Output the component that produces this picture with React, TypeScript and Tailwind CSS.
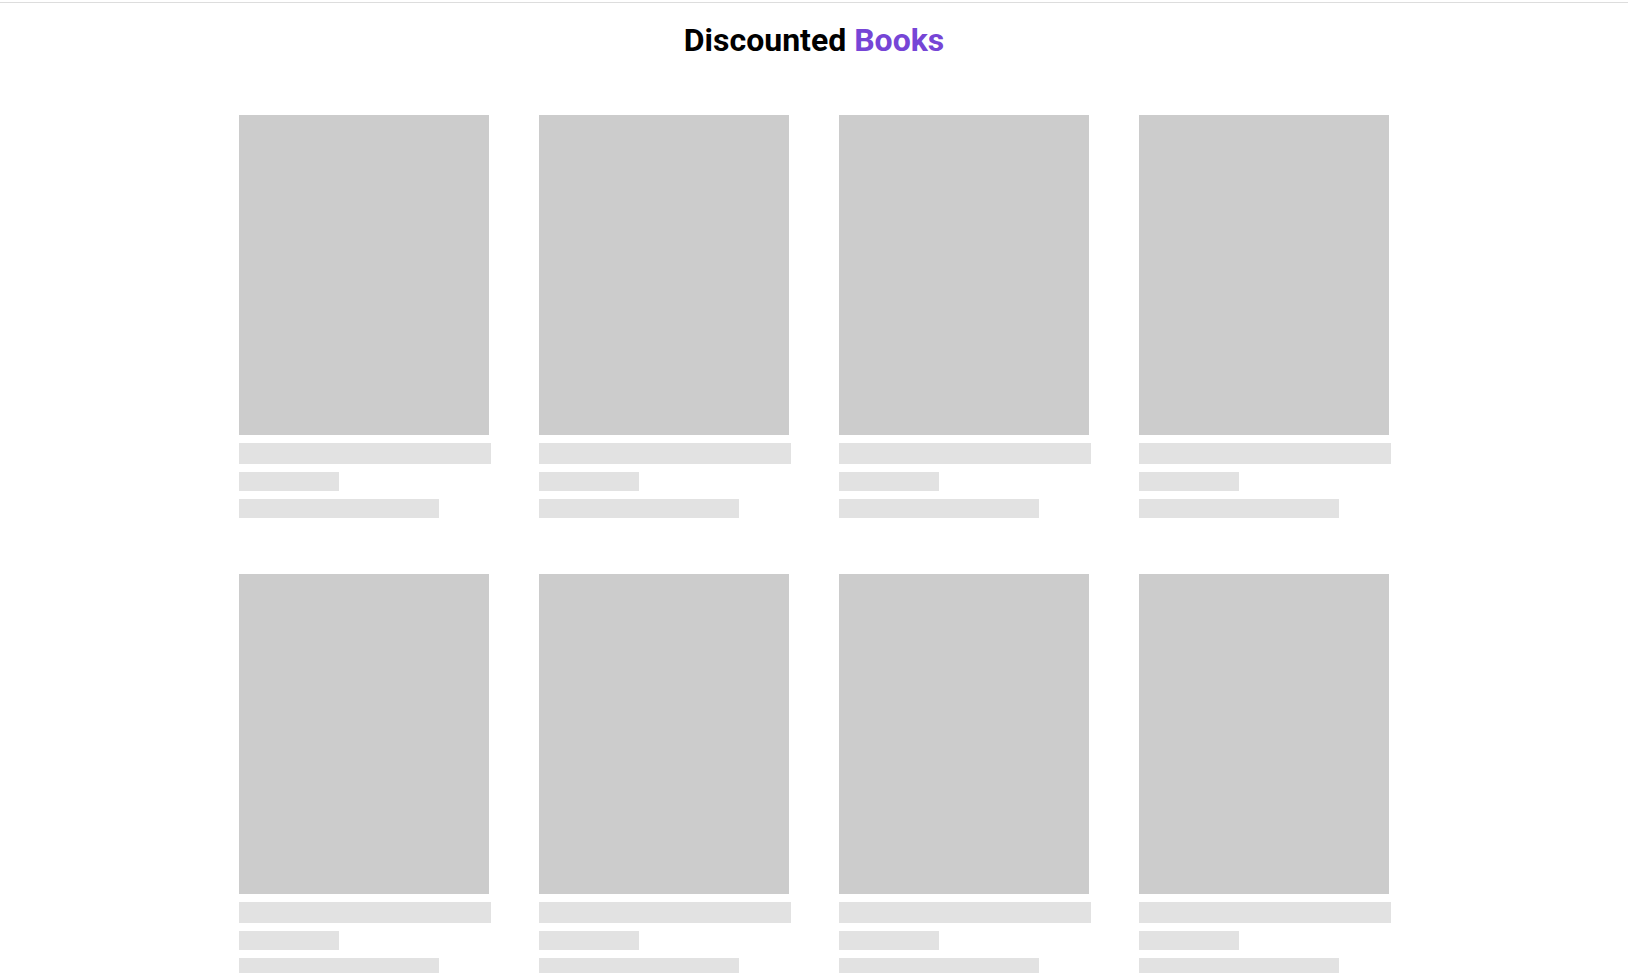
import React from "react";

const BookSkeleton = () => {
  return (
    <div className="w-[250px]">
      <div className="h-[320px] w-[250px] bg-[#cccccc]" />
      <div className="mt-2 h-[21px] w-[252px] bg-[#e2e2e2]" />
      <div className="mt-2 h-[19px] w-[100px] bg-[#e2e2e2]" />
      <div className="mt-2 h-[19px] w-[200px] bg-[#e2e2e2]" />
    </div>
  );
};

const App = () => {
  return (
    <div className="min-h-screen bg-white font-['Roboto',sans-serif]">
      <div className="h-[3px] border-b border-[#dddddd]" />
      <h1 className="mt-[21px] text-center text-[32px] font-bold leading-8 text-black">
        Discounted <span className="text-[#7645d6]">Books</span>
      </h1>
      <div className="mx-auto mt-[59px] grid w-[1150px] grid-cols-4 gap-x-[50px] gap-y-[56px]">
        {Array(8)
          .fill(0)
          .map((_, i) => (
            <BookSkeleton key={i} />
          ))}
      </div>
    </div>
  );
};

export default App;
